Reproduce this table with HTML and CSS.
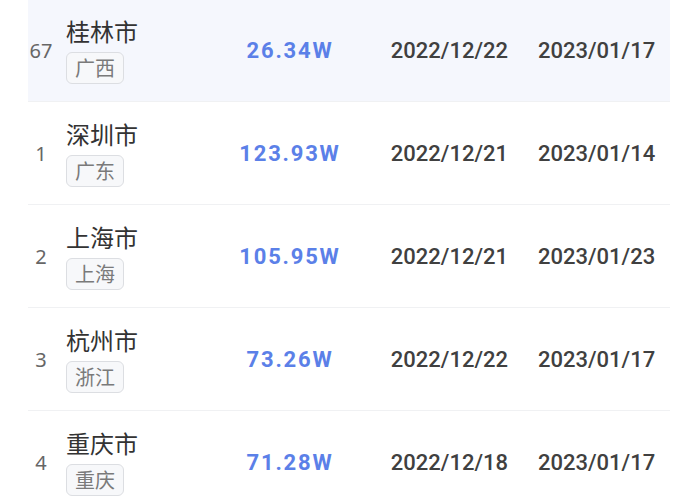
FILE: index.html
```html
<!DOCTYPE html>
<html lang="zh-CN">
<head>
<meta charset="utf-8">
<link rel="stylesheet" href="styles.css">
</head>
<body>
<div class="list">
  <div class="row active">
    <div class="rank">67</div>
    <div class="name"><div class="city">桂林市</div><span class="tag">广西</span></div>
    <div class="num">26.34W</div>
    <div class="date d1">2022/12/22</div>
    <div class="date d2">2023/01/17</div>
  </div>
  <div class="row">
    <div class="rank">1</div>
    <div class="name"><div class="city">深圳市</div><span class="tag">广东</span></div>
    <div class="num">123.93W</div>
    <div class="date d1">2022/12/21</div>
    <div class="date d2">2023/01/14</div>
  </div>
  <div class="row">
    <div class="rank">2</div>
    <div class="name"><div class="city">上海市</div><span class="tag">上海</span></div>
    <div class="num">105.95W</div>
    <div class="date d1">2022/12/21</div>
    <div class="date d2">2023/01/23</div>
  </div>
  <div class="row">
    <div class="rank">3</div>
    <div class="name"><div class="city">杭州市</div><span class="tag">浙江</span></div>
    <div class="num">73.26W</div>
    <div class="date d1">2022/12/22</div>
    <div class="date d2">2023/01/17</div>
  </div>
  <div class="row">
    <div class="rank">4</div>
    <div class="name"><div class="city">重庆市</div><span class="tag">重庆</span></div>
    <div class="num">71.28W</div>
    <div class="date d1">2022/12/18</div>
    <div class="date d2">2023/01/17</div>
  </div>
</div>
</body>
</html>
```

FILE: styles.css
```css
html, body {
  margin: 0;
  padding: 0;
  background: #ffffff;
  overflow: hidden;
}
body {
  font-family: "Noto Sans CJK SC", "Noto Sans", sans-serif;
}
.list {
  margin: -1px 0 0 28px;
  width: 642px;
}
.row {
  display: grid;
  grid-template-columns: 26px 166px 140px 148px 30px 132px;
  grid-template-areas: "rank name num d1 . d2";
  align-items: center;
  height: 102px;
  border-bottom: 1px solid #f0f1f3;
}
.row.active {
  background: #f5f7fd;
}
.rank {
  grid-area: rank;
  text-align: center;
  font-family: "Noto Sans", "Roboto", sans-serif;
  font-size: 20px;
  color: #666;
}
.name {
  grid-area: name;
  padding-left: 12px;
  display: flex;
  flex-direction: column;
  align-items: flex-start;
  gap: 5px;
  margin-top: -2px;
}
.city {
  font-size: 24px;
  line-height: 32px;
  color: #333;
}
.tag {
  box-sizing: border-box;
  height: 32px;
  padding: 0 8px;
  border: 1px solid #dcdee2;
  border-radius: 6px;
  background: #f7f8fa;
  font-size: 20px;
  line-height: 30px;
  color: #7a7a7a;
}
.num {
  grid-area: num;
  text-align: center;
  font-family: "Roboto", sans-serif;
  font-weight: 700;
  font-size: 22px;
  letter-spacing: 1.8px;
  color: #5b80e8;
}
.date {
  font-family: "Roboto", sans-serif;
  font-weight: 500;
  font-size: 22px;
  color: #404040;
}
.d1 {
  grid-area: d1;
  text-align: right;
}
.d2 {
  grid-area: d2;
  text-align: left;
}
```
